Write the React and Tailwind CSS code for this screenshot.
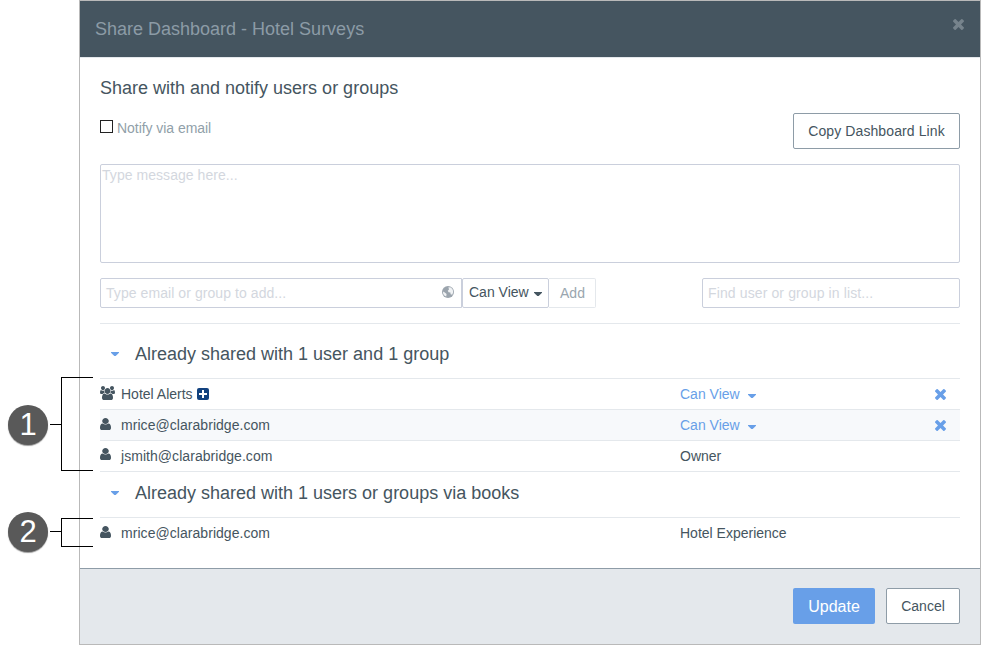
const ICONS = {
  times: {
    box: "302 366 1188 1188",
    d: "M1490 1322q0 40-28 68l-136 136q-28 28-68 28t-68-28l-294-294-294 294q-28 28-68 28t-68-28l-136-136q-28-28-28-68t28-68l294-294-294-294q-28-28-28-68t28-68l136-136q28-28 68-28t68 28l294 294 294-294q28-28 68-28t68 28l136 136q28 28 28 68t-28 68l-294 294 294 294q28 28 28 68z",
  },
  user: {
    box: "256 128 1280 1536",
    d: "M1536 1399q0 109-62.5 187t-150.5 78h-854q-88 0-150.5-78t-62.5-187q0-85 8.5-160.5t31.5-152 58.5-131 94-89 134.5-34.5q131 128 313 128t313-128q76 0 134.5 34.5t94 89 58.5 131 31.5 152 8.5 160.5zm-256-887q0 159-112.5 271.5t-271.5 112.5-271.5-112.5-112.5-271.5 112.5-271.5 271.5-112.5 271.5 112.5 112.5 271.5z",
  },
  users: {
    box: "-64 0 1920 1792",
    d: "M529 896q-162 5-265 128h-134q-82 0-138-40.5t-56-118.5q0-353 124-353 6 0 43.5 21t97.5 42.5 119 21.5q67 0 133-23-5 37-5 66 0 139 81 256zm1071 637q0 120-73 189.5t-194 69.5h-874q-121 0-194-69.5t-73-189.5q0-53 3.5-103.5t14-109 26.5-108.5 43-97.5 62-81 85.5-53.5 111.5-20q10 0 43 21.5t73 48 107 48 135 21.5 135-21.5 107-48 73-48 43-21.5q61 0 111.5 20t85.5 53.5 62 81 43 97.5 26.5 108.5 14 109 3.5 103.5zm-1024-1277q0 106-75 181t-181 75-181-75-75-181 75-181 181-75 181 75 75 181zm704 384q0 159-112.5 271.5t-271.5 112.5-271.5-112.5-112.5-271.5 112.5-271.5 271.5-112.5 271.5 112.5 112.5 271.5zm576 225q0 78-56 118.5t-138 40.5h-134q-103-123-265-128 81-117 81-256 0-29-5-66 66 23 133 23 59 0 119-21.5t97.5-42.5 43.5-21q124 0 124 353zm-128-609q0 106-75 181t-181 75-181-75-75-181 75-181 181-75 181 75 75 181z",
  },
};

function Icon({ name, className }) {
  return (
    <svg viewBox={ICONS[name].box} preserveAspectRatio="none" fill="currentColor" className={className}>
      <path d={ICONS[name].d} />
    </svg>
  );
}

function Caret({ className }) {
  return (
    <svg viewBox="0 0 8 4" fill="currentColor" className={`h-1 w-2 ${className}`}>
      <path d="M0 0h8v.7L4.7 4H3.3L0 .7z" />
    </svg>
  );
}

function Globe() {
  return (
    <svg viewBox="0 0 12 12" className="-mt-0.5 h-3 w-3">
      <circle cx="6" cy="6" r="6" fill="#9ba4ad" />
      <path d="M6.4 1.2 9 1.6l1.8 2.2.4 2.4-1 2.6-1.6-.6-.2-1.6-1.8-.4-.8-1.4L7 3.4zM1 5.6l1.8 1L4.6 8l-.4 2.6-1.6-.8L1.2 8z" fill="#f0f2f4" />
    </svg>
  );
}

function Plus() {
  return (
    <svg viewBox="0 0 12 12" className="ml-1 h-3 w-3">
      <rect width="12" height="12" rx="2" fill="#12427f" />
      <path d="M5 2h2v3h3v2H7v3H5V7H2V5h3z" fill="#fff" />
    </svg>
  );
}

function Row({ icon = "user", iconClass = "-mt-0.5", name, plus, role, link, shaded }) {
  return (
    <div className={`flex h-[31px] items-center border-t border-[#e4e8ec] ${shaded ? "bg-[#f7f9fb]" : ""}`}>
      <div className="flex w-[580px] items-center">
        <div className="flex w-[21px]">
          <Icon name={icon} className={`${icon === "users" ? "h-[14px] w-[15px]" : "h-3 w-[11px]"} ${iconClass}`} />
        </div>
        <span className={plus ? "" : "tracking-[0.05px]"}>{name}</span>
        {plus && <Plus />}
      </div>
      {link ? (
        <div className="flex flex-1 items-center text-[#689fe8]">
          {role}
          <Caret className="mt-1 ml-2" />
          <Icon name="times" className="mr-3.5 ml-auto h-[11px] w-[11px]" />
        </div>
      ) : (
        <div>{role}</div>
      )}
    </div>
  );
}

function SectionTitle({ children, className }) {
  return (
    <div className={`flex items-center text-lg ${className}`}>
      <Caret className="mr-4 ml-[11px] text-[#689fe8]" />
      {children}
    </div>
  );
}

function Callout({ number, className, bracketClass }) {
  return (
    <div className={`flex ${className}`}>
      <div className="flex h-10 w-10 items-center justify-center rounded-full bg-[#595959] text-[31px] text-white shadow-[0_1px_1px_#999]">
        {number}
      </div>
      <div className="mt-[19px] ml-0.5 h-px w-[11px] bg-black" />
      <div className={`w-8 border border-r-0 border-black ${bracketClass}`} />
    </div>
  );
}

export default function App() {
  return (
    <div className="relative flex h-[645px] w-[981px] bg-white pl-[79px] font-['Liberation_Sans',Arial,sans-serif] text-sm text-[#455560]">
      <div className="flex w-[902px] flex-col border border-[#b9b9b9]">
        <header className="flex h-[57px] justify-between border-b border-[#e4e8ec] bg-[#455560] pl-[15px] pr-4 text-lg text-[#8c9ba6]">
          <div className="leading-14">Share Dashboard - Hotel Surveys</div>
          <Icon name="times" className="mt-[18px] h-[11px] w-[11px] text-[#76838c]" />
        </header>

        <main className="h-[510px] px-5">
          <h1 className="pt-4 text-lg leading-7">Share with and notify users or groups</h1>
          <div className="mt-[11px] flex h-9 justify-between">
            <label className="flex h-[30px] items-center tracking-[-0.05px] text-[#919fa9]">
              <span className="mr-1 -mt-1 h-[13px] w-[13px] border border-[#222]" />
              Notify via email
            </label>
            <button className="w-[167px] rounded-xs border border-[#8e9ca7] tracking-[0.1px]">
              Copy Dashboard Link
            </button>
          </div>
          <div className="mt-[15px] h-[99px] rounded-xs border border-[#cacfdc] px-px leading-5 tracking-[0.05px] text-[#d3d7de]">
            Type message here...
          </div>
          <div className="mt-[15px] flex h-[30px]">
            <div className="flex w-[362px] items-center justify-between rounded-l-xs border border-[#cacfdc] pl-[5px] pr-[7px] tracking-[0.07px] text-[#d3d7de]">
              Type email or group to add...
              <Globe />
            </div>
            <div className="flex w-[87px] items-center rounded-xs border border-[#cacfdc] pl-1.5 pb-0.5">
              Can View
              <Caret className="ml-[5px] mt-1" />
            </div>
            <div className="flex w-[47px] items-center justify-center rounded-r-xs border border-l-0 border-[#e4e8ec] pl-px text-[#9aa6af]">
              Add
            </div>
            <div className="ml-auto flex w-[258px] items-center rounded-xs border border-[#cacfdc] pl-[5px] tracking-[0.12px] text-[#d3d7de]">
              Find user or group in list...
            </div>
          </div>
          <div className="mt-[15px] border-t border-[#e4e8ec]" />
          <SectionTitle className="h-[54px] pt-1.5">Already shared with 1 user and 1 group</SectionTitle>
          <Row icon="users" name="Hotel Alerts" plus role="Can View" link />
          <Row name="mrice@clarabridge.com" role="Can View" link shaded />
          <Row iconClass="-mt-1" name="jsmith@clarabridge.com" role="Owner" />
          <SectionTitle className="h-[46px] border-t border-[#e4e8ec] pb-[3px]">
            Already shared with 1 users or groups via books
          </SectionTitle>
          <Row name="mrice@clarabridge.com" role="Hotel Experience" />
        </main>

        <footer className="flex flex-1 justify-end gap-[11px] border-t border-[#8e9ca7] bg-[#e4e8ec] pt-[19px] pr-5">
          <button className="h-9 w-[82px] rounded-xs bg-[#689fe8] pt-0.5 text-base text-white">Update</button>
          <button className="h-9 w-[74px] rounded-xs border border-[#8e9ca7] bg-white">Cancel</button>
        </footer>
      </div>

      <Callout number="1" className="absolute top-[405px] left-2" bracketClass="-mt-7 h-[94px]" />
      <Callout number="2" className="absolute top-[512px] left-2" bracketClass="mt-1.5 h-[29px]" />
    </div>
  );
}
